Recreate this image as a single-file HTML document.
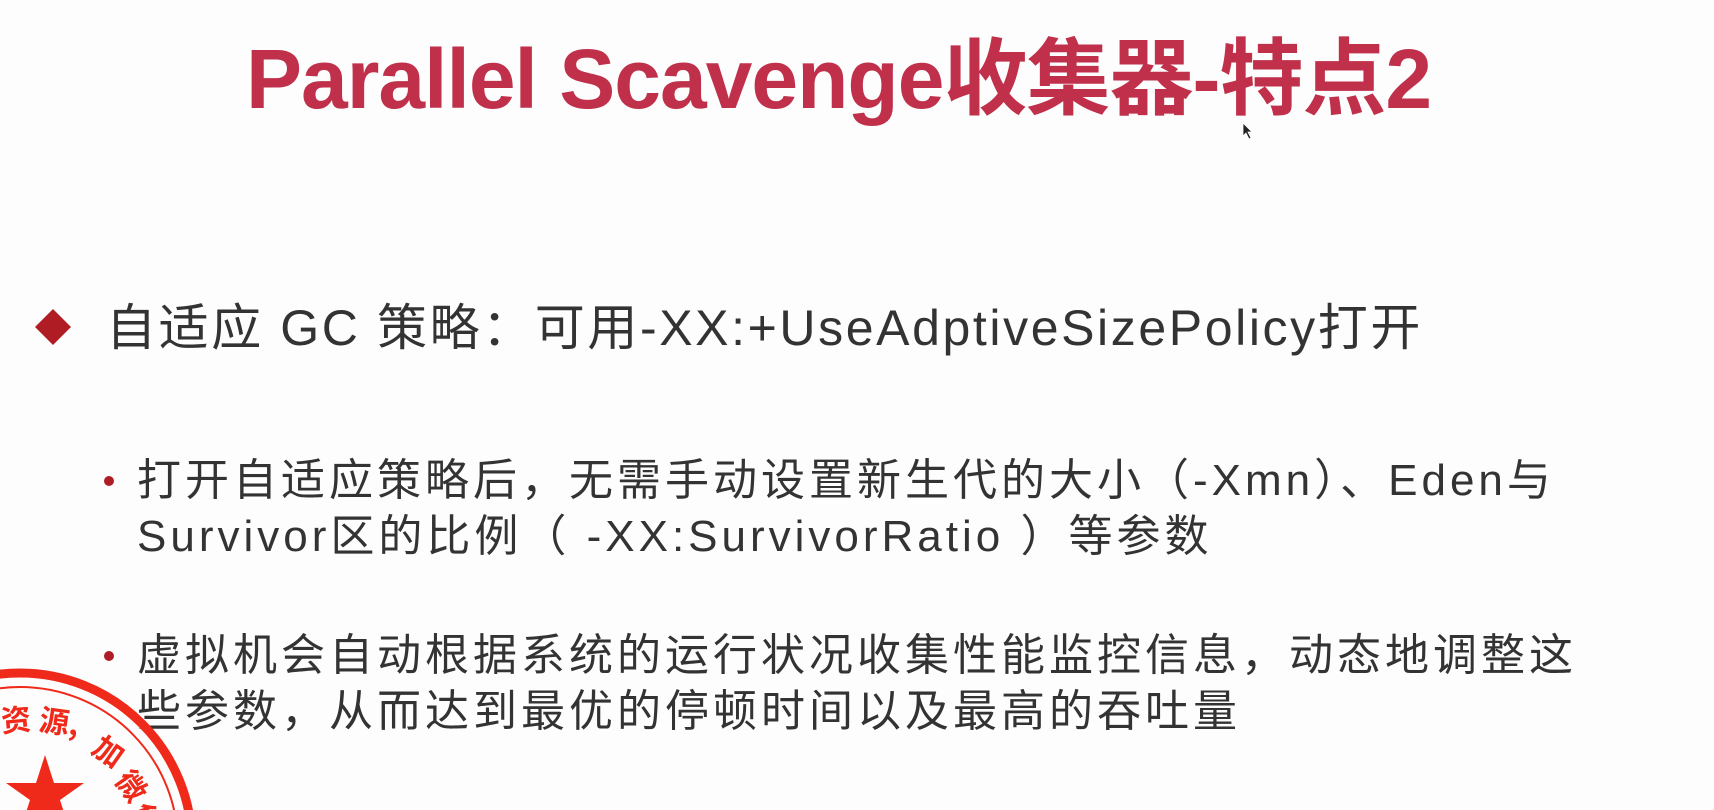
<!DOCTYPE html>
<html><head><meta charset="utf-8"><style>
html,body{margin:0;padding:0;}
body{width:1714px;height:810px;background:#fdfdfd;position:relative;overflow:hidden;font-family:"Liberation Sans","Noto Sans CJK SC",sans-serif;}
.t{position:absolute;white-space:nowrap;}
#title{left:246px;top:12px;font-size:84px;font-weight:bold;color:#c0304a;letter-spacing:-1px;}
.l1{left:106px;top:288px;font-size:50px;color:#333;letter-spacing:2.6px;}
.s{left:137px;font-size:44px;color:#333;line-height:56px;letter-spacing:4px;}
.dot{position:absolute;width:10px;height:10px;border-radius:50%;background:#b01c24;}
</style></head><body>
<div class="t" id="title">Parallel Scavenge收集器-特点2</div>
<svg style="position:absolute;left:1242px;top:122px" width="12" height="18"><path d="M1 1 L1 14 L4 11 L7 17 L9 16 L6 10 L10 10 Z" fill="#222" stroke="#fff" stroke-width="0.8"/></svg>
<svg style="position:absolute;left:34px;top:308px" width="38" height="38"><path d="M19 1 L37 19 L19 37 L1 19 Z" fill="#b01c24"/></svg>
<div class="t l1">自适应 GC 策略：可用-XX:+UseAdptiveSizePolicy打开</div>
<div class="dot" style="left:104px;top:476px"></div>
<div class="t s" style="top:453px">打开自适应策略后，无需手动设置新生代的大小（-Xmn）、Eden与<br>Survivor区的比例（ -XX:SurvivorRatio ）等参数</div>
<div class="dot" style="left:104px;top:651px"></div>
<div class="t s" style="top:628px">虚拟机会自动根据系统的运行状况收集性能监控信息，动态地调整这<br>些参数，从而达到最优的停顿时间以及最高的吞吐量</div>
<svg style="position:absolute;left:0;top:620px" width="250" height="190">
<circle cx="20" cy="225" r="172" fill="none" stroke="#f02a1a" stroke-width="9"/>
<circle cx="20" cy="225" r="158" fill="none" stroke="#f02a1a" stroke-width="2"/>
<path d="M45 135 L54 163 L84 163 L60 180 L69 208 L45 191 L21 208 L30 180 L6 163 L36 163 Z" fill="#f02a1a"/>
<g fill="#f02a1a" font-family="Noto Sans CJK SC,sans-serif" font-size="30" font-weight="bold">
<text x="2" y="112" transform="rotate(-5 2 112)">资</text>
<text x="38" y="110" transform="rotate(8 38 110)">源,</text>
<text x="90" y="132" transform="rotate(35 90 132)">加</text>
<text x="114" y="160" transform="rotate(55 114 160)">微</text>
<text x="130" y="188" transform="rotate(70 130 188)">信</text>
</g>
</svg>
</body></html>
